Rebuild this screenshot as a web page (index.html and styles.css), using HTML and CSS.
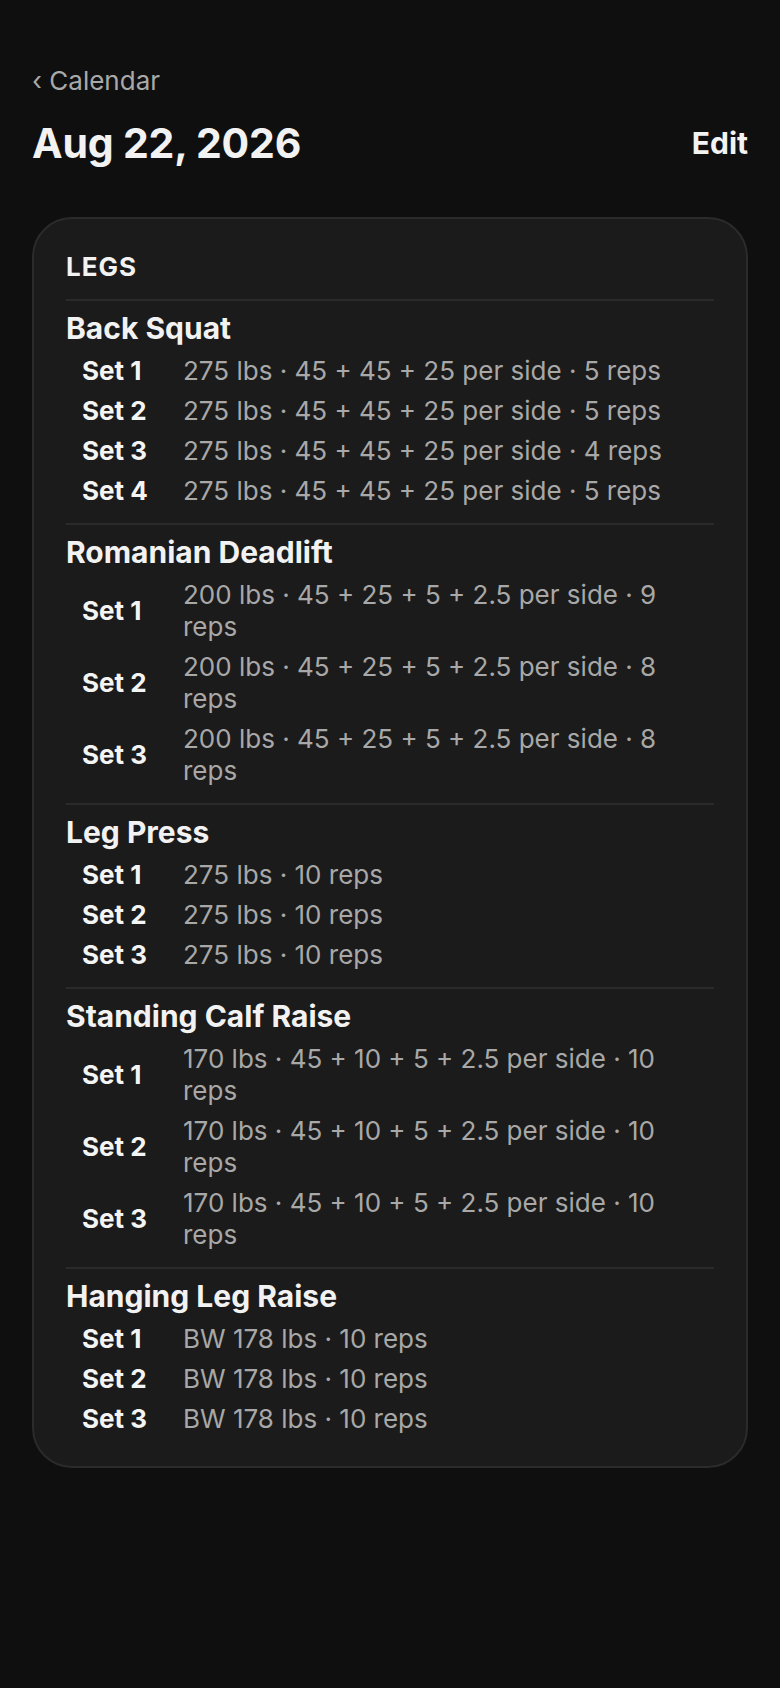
FILE: index.html
```html
<!DOCTYPE HTML>
<html lang="en-US">
<head>
	<meta charset="UTF-8">
	<title>Aug 22, 2026</title>
	<link rel="stylesheet" href="styles.css">
</head>
<body>
	<div class="page">
		<a class="back" href="#">&lsaquo; Calendar</a>
		<div class="header">
			<h1 class="title">Aug 22, 2026</h1>
			<a class="edit" href="#">Edit</a>
		</div>

		<div class="card">
			<div class="group">LEGS</div>

			<div class="exercise">
				<div class="name">Back Squat</div>
				<div class="sets">
					<div class="set"><span class="label">Set 1</span><span class="value">275 lbs · 45 + 45 + 25 per side · 5 reps</span></div>
					<div class="set"><span class="label">Set 2</span><span class="value">275 lbs · 45 + 45 + 25 per side · 5 reps</span></div>
					<div class="set"><span class="label">Set 3</span><span class="value">275 lbs · 45 + 45 + 25 per side · 4 reps</span></div>
					<div class="set"><span class="label">Set 4</span><span class="value">275 lbs · 45 + 45 + 25 per side · 5 reps</span></div>
				</div>
			</div>

			<div class="exercise">
				<div class="name">Romanian Deadlift</div>
				<div class="sets">
					<div class="set"><span class="label">Set 1</span><span class="value">200 lbs · 45 + 25 + 5 + 2.5 per side · 9 reps</span></div>
					<div class="set"><span class="label">Set 2</span><span class="value">200 lbs · 45 + 25 + 5 + 2.5 per side · 8 reps</span></div>
					<div class="set"><span class="label">Set 3</span><span class="value">200 lbs · 45 + 25 + 5 + 2.5 per side · 8 reps</span></div>
				</div>
			</div>

			<div class="exercise">
				<div class="name">Leg Press</div>
				<div class="sets">
					<div class="set"><span class="label">Set 1</span><span class="value">275 lbs · 10 reps</span></div>
					<div class="set"><span class="label">Set 2</span><span class="value">275 lbs · 10 reps</span></div>
					<div class="set"><span class="label">Set 3</span><span class="value">275 lbs · 10 reps</span></div>
				</div>
			</div>

			<div class="exercise">
				<div class="name">Standing Calf Raise</div>
				<div class="sets">
					<div class="set"><span class="label">Set 1</span><span class="value">170 lbs · 45 + 10 + 5 + 2.5 per side · 10 reps</span></div>
					<div class="set"><span class="label">Set 2</span><span class="value">170 lbs · 45 + 10 + 5 + 2.5 per side · 10 reps</span></div>
					<div class="set"><span class="label">Set 3</span><span class="value">170 lbs · 45 + 10 + 5 + 2.5 per side · 10 reps</span></div>
				</div>
			</div>

			<div class="exercise">
				<div class="name">Hanging Leg Raise</div>
				<div class="sets">
					<div class="set"><span class="label">Set 1</span><span class="value">BW 178 lbs · 10 reps</span></div>
					<div class="set"><span class="label">Set 2</span><span class="value">BW 178 lbs · 10 reps</span></div>
					<div class="set"><span class="label">Set 3</span><span class="value">BW 178 lbs · 10 reps</span></div>
				</div>
			</div>
		</div>
	</div>
</body>
</html>
```

FILE: styles.css
```css
html, body
{
	margin: 0;
	padding: 0;
	background: #0f0f0f;
}

body
{
	font-family: Inter, "Noto Sans", "Liberation Sans", sans-serif;
	color: #f2f2f2;
	-webkit-font-smoothing: antialiased;
}

.page
{
	padding: 65px 32px 80px;
}

.back
{
	display: block;
	font-size: 26px;
	line-height: 32px;
	color: #a9a9a9;
	text-decoration: none;
}

.header
{
	display: flex;
	align-items: center;
	justify-content: space-between;
	margin-top: 22px;
}

.title
{
	margin: 0;
	font-size: 41px;
	line-height: 48px;
	font-weight: 700;
	letter-spacing: -0.2px;
}

.edit
{
	font-size: 30px;
	font-weight: 700;
	color: #f2f2f2;
	text-decoration: none;
}

.card
{
	margin-top: 50px;
	background: #1b1b1b;
	border: 2px solid #2b2b2b;
	border-radius: 40px;
	padding: 32px 32px 31px;
}

.group
{
	font-size: 26px;
	line-height: 32px;
	font-weight: 700;
	letter-spacing: 1px;
	margin-bottom: 16px;
}

.exercise
{
	border-top: 2px solid #2b2b2b;
	padding: 10px 0 16px;
}

.exercise:last-child
{
	padding-bottom: 0;
}

.name
{
	font-size: 30px;
	line-height: 34px;
	font-weight: 700;
	margin-bottom: 10px;
}

.sets
{
	display: flex;
	flex-direction: column;
	gap: 8px;
	padding: 0 16px;
}

.set
{
	display: grid;
	grid-template-columns: 101px 1fr;
	align-items: center;
	font-size: 26px;
	line-height: 32px;
}

.label
{
	font-weight: 700;
	color: #f4f4f4;
}

.value
{
	color: #a8a8a8;
}
```
